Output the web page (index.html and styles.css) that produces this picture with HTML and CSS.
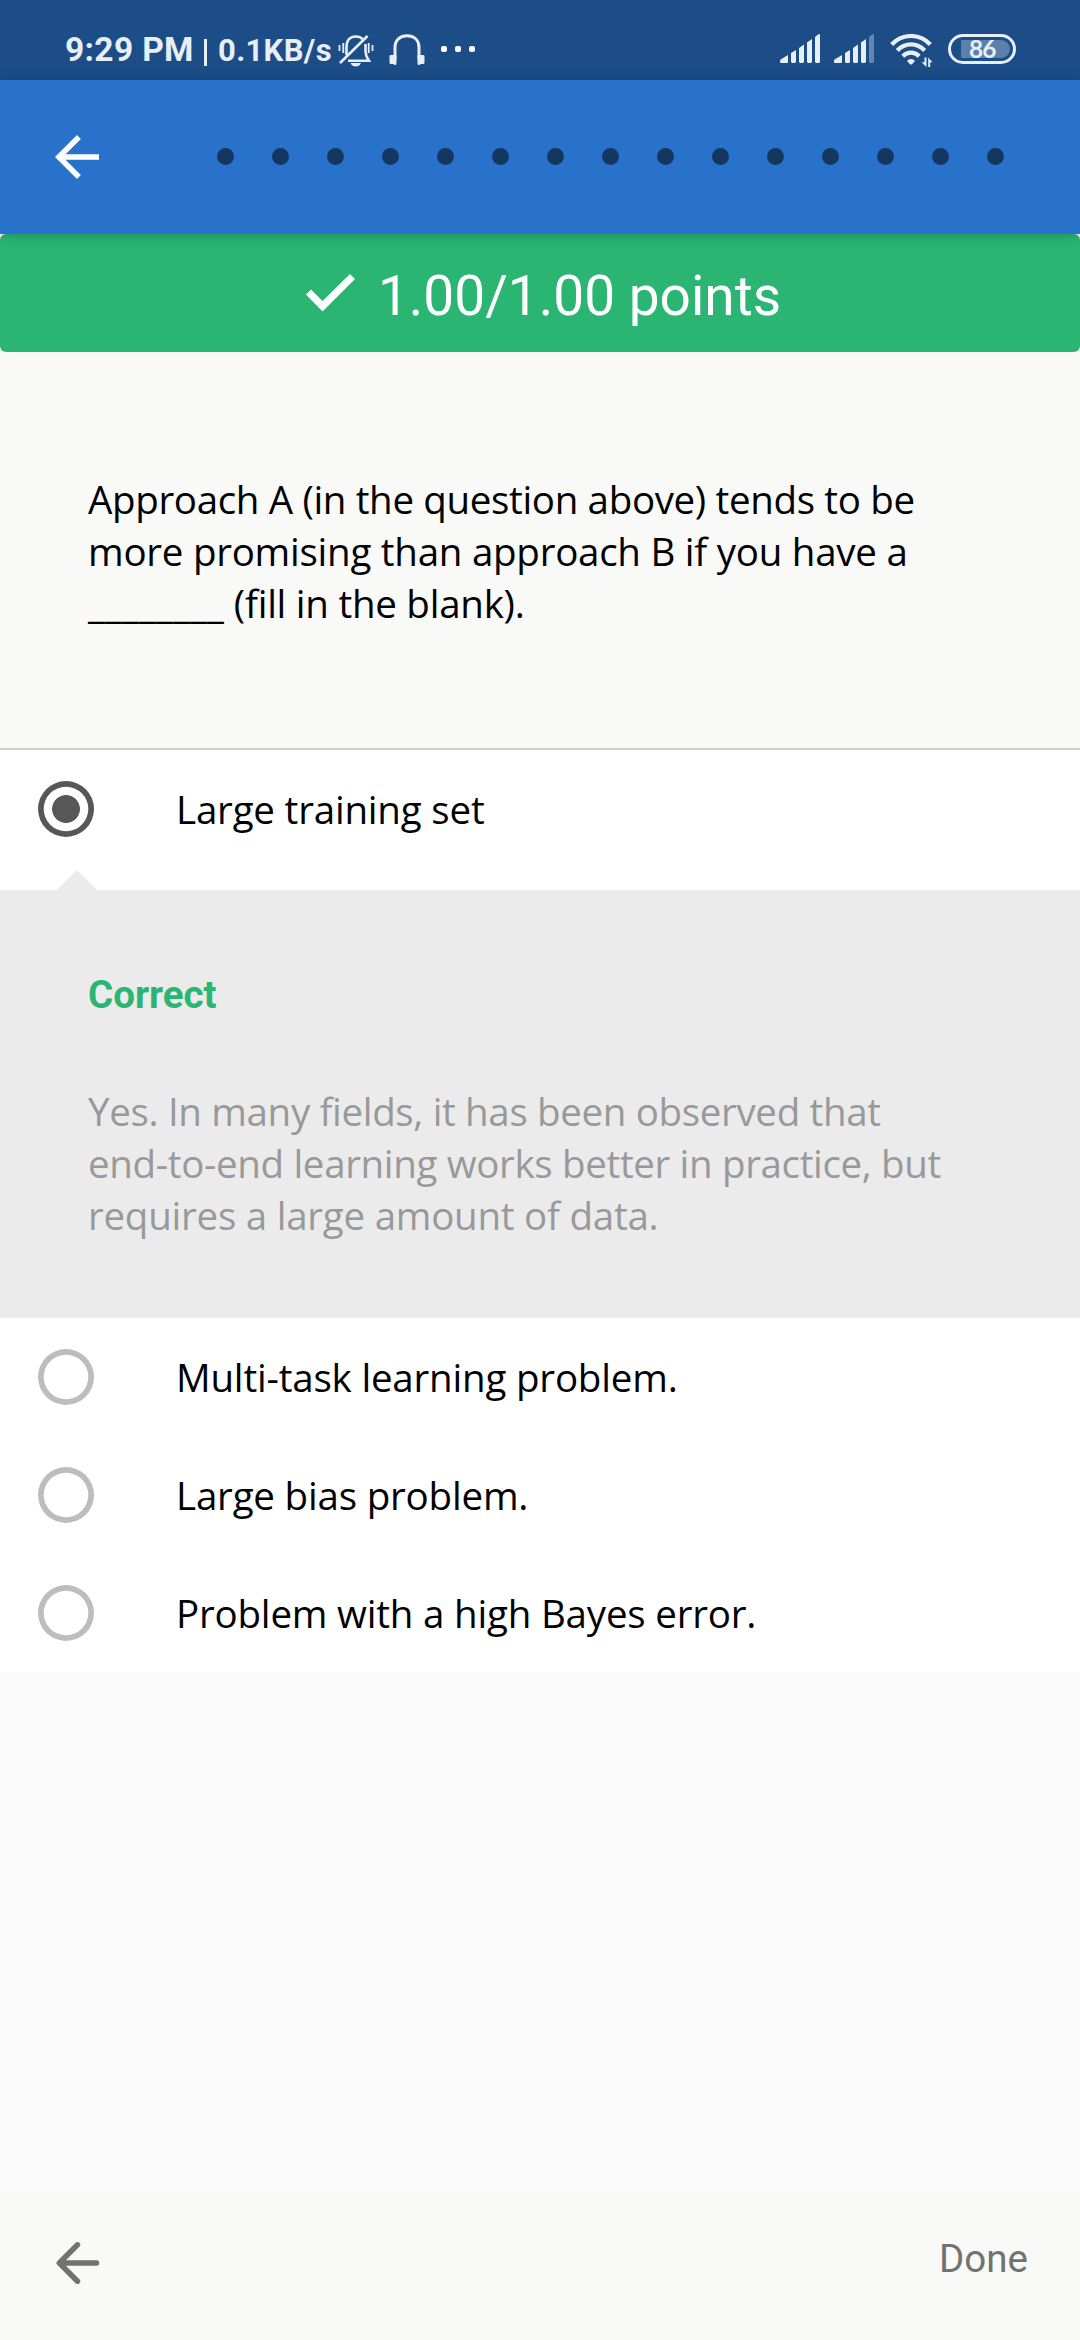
FILE: index.html
```html
<!DOCTYPE html>
<html lang="en">
<head>
<meta charset="utf-8">
<title>Quiz</title>
<link rel="stylesheet" href="styles.css">
</head>
<body>
<div class="screen">
  <div class="status-bar">
    <div class="status-left">
      <span class="clock">9:29 PM</span>
      <span class="divider"></span>
      <span class="speed">0.1KB/s</span>
      <svg class="bell" width="36" height="34" viewBox="0 0 36 34" fill="none" stroke="#e8eef6" stroke-width="2.6">
        <path d="M8.5 21V13C8.5 6 12 2.500 18 2.500C21 2.500 23 3.400 24.500 5M27.500 10V17C27.500 22 29 23.500 31 26.700H10"/>
        <path d="M2 29L29.500 2"/>
        <path d="M5.300 9V19M1.500 11V17M30.700 9V19M34.500 11V17" stroke-width="1.800"/>
        <path d="M12.500 29H23Q21.500 32.500 17.700 32.500Q14 32.500 12.500 29Z" fill="#e8eef6" stroke="none"/>
      </svg>
      <svg class="headphones" width="36" height="32" viewBox="0 0 36 32">
        <path d="M6 25V13.500C6 6 11 1.800 17.900 1.800C25 1.800 30 6 30 13.500V25" fill="none" stroke="#e8eef6" stroke-width="3"/>
        <path d="M.5 22Q.5 21 2 21H6.500Q7.500 21 7.500 22V29.500Q7.500 31 6 31Q4.500 31 4.500 30H2Q.5 30 .5 28.500ZM35.500 22Q35.500 21 34 21H29.500Q28.500 21 28.500 22V29.500Q28.500 31 30 31Q31.500 31 31.500 30H34Q35.500 30 35.500 28.500Z" fill="#e8eef6"/>
      </svg>
      <span class="more"><i></i><i></i><i></i></span>
    </div>
    <div class="status-right">
      <svg width="40" height="29" viewBox="0 0 40 29" fill="#e8eef6">
        <path d="M0 27Q0 26 1 25.300L8 21V28Q8 29 7 29H1Q0 29 0 28ZM11 19L16 16V28L15 29H12L11 28ZM19 14L24 10.500V28L23 29H20L19 28ZM27 8.500L32 5V28L31 29H28L27 28ZM35 3L38 .5Q40-.5 40 1V28L39 29H36L35 28Z"/>
      </svg>
      <svg class="signal-two" width="40" height="29" viewBox="0 0 40 29" fill="#e8eef6">
        <path d="M0 27Q0 26 1 25.300L8 21V28Q8 29 7 29H1Q0 29 0 28ZM11 19L16 16V28L15 29H12L11 28ZM19 14L24 10.500V28L23 29H20L19 28ZM27 8.500L32 5V28L31 29H28L27 28Z"/>
        <path d="M35 3L38 .5Q40-.5 40 1V28L39 29H36L35 28Z" opacity=".35"/>
      </svg>
      <svg class="wifi" width="44" height="34" viewBox="0 0 44 34" fill="none" stroke="#e8eef6" stroke-width="4.200">
        <path d="M1.700 10.500Q9.500 2 21 2T40.300 10.500M7.300 16.500Q13 10.300 21 10.300T34.700 16.500M12.800 22.200Q16.500 18.600 21 18.600T29.200 22.200"/>
        <path d="M17 27Q18.500 25 21 25T25 27L22 30.200Q21 31 20 30.200Z" fill="#e8eef6" stroke="none"/>
        <path d="M36.500 23.500V33L31.500 28.300H34.500V23.500ZM38.200 33V23.500L42.500 28.300H40.200V33Z" fill="#e8eef6" stroke="none"/>
      </svg>
      <span class="battery"><span class="level">86</span></span>
    </div>
  </div>

  <header class="app-bar">
    <svg width="66" height="66" viewBox="0 0 24 24" fill="#fff"><path d="M20 11H7.830l5.590-5.590L12 4l-8 8 8 8 1.410-1.410L7.830 13H20v-2z"/></svg>
    <div class="steps"><i></i><i></i><i></i><i></i><i></i><i></i><i></i><i></i><i></i><i></i><i></i><i></i><i></i><i></i><i></i></div>
  </header>

  <main>
    <div class="score-wrap">
      <div class="score">
        <svg width="49" height="38" viewBox="0 0 49 38" fill="#fff"><path d="M0 20.500L5 15.500L16.500 27L44 0L49 5L16.500 37.500Z"/></svg>
        <span class="points">1.00/1.00 points</span>
      </div>
    </div>
    <p class="question"><span class="tight">Approach A (in the question above) tends to be</span><br>more promising than approach B if you have a<br><span class="blank">________</span> (fill in the blank).</p>
    <div class="option first"><span class="radio checked"></span><span>Large training set</span></div>
    <section class="feedback">
      <h2>Correct</h2>
      <p><span class="tight">Yes. In many fields, it has been observed that</span><br><span class="tight">end-to-end learning works better in practice, but</span><br>requires a large amount of data.</p>
    </section>
    <div class="option"><span class="radio"></span><span>Multi-task learning problem.</span></div>
    <div class="option"><span class="radio"></span><span>Large bias problem.</span></div>
    <div class="option"><span class="radio"></span><span>Problem with a high Bayes error.</span></div>
  </main>

  <footer class="footer">
    <svg width="44" height="44" viewBox="0 0 44 44" fill="none" stroke="#727270" stroke-width="5.500" stroke-linecap="round" stroke-linejoin="round"><path d="M40.500 22H4M21.500 3.800L3.300 22L21.500 40.200"/></svg>
    <span class="done">Done</span>
  </footer>
</div>
</body>
</html>
```
FILE: styles.css
```css
* { box-sizing: border-box; }
body { margin: 0; }
p, h2 { margin: 0; }
svg { display: block; flex: none; }

.screen {
  width: 1080px;
  height: 2340px;
  display: flex;
  flex-direction: column;
  background: #fafafa;
  font-family: "Open Sans", sans-serif;
  font-size: 38.5px;
  line-height: 52px;
  color: #000;
  white-space: nowrap;
  overflow: hidden;
}

.status-bar {
  height: 80px;
  flex: none;
  display: flex;
  justify-content: space-between;
  padding: 34px 64px 0 65px;
  background: #1c4d87;
  color: #e8eef6;
  font-family: Roboto, sans-serif;
  font-weight: 700;
}
.status-left, .status-right { display: flex; align-items: flex-start; height: 34px; }
.clock { width: 139px; font-size: 33.5px; line-height: 32px; letter-spacing: .35px; }
.divider { width: 3px; height: 27px; margin-top: 5px; background: #e8eef6; }
.speed { width: 119px; margin-left: 11px; font-size: 31px; line-height: 34px; letter-spacing: .35px; }
.bell { margin-left: 1px; }
.headphones { margin-left: 15px; }
.more { display: flex; gap: 8px; margin: 12px 0 0 16px; }
.more i { width: 6px; height: 6px; border-radius: 2px; background: #fff; }
.signal-two { margin-left: 14px; }
.wifi { margin-left: 16px; }
.battery {
  width: 68px;
  height: 30px;
  margin-left: 14px;
  padding: 3px 3px 3px 10px;
  border: 3px solid #e8eef6;
  border-radius: 15px;
}
.level {
  display: block;
  width: 49px;
  height: 18px;
  padding-left: 8px;
  border-radius: 1px 9px 9px 1px;
  background: #5c80ab;
  font: 700 24.500px/18px Lato, sans-serif;
  letter-spacing: -1px;
}

.app-bar {
  height: 154px;
  flex: none;
  display: flex;
  align-items: center;
  padding: 0 76px 0 44px;
  background: #2972cc;
  position: relative;
  box-shadow: 0 2px 12px rgba(0, 0, 0, .22);
}
.steps { display: flex; gap: 38px; margin: 0 0 1px 107px; }
.steps i { width: 17px; height: 17px; border-radius: 50%; background: #14375f; }

.score-wrap { background: #fafafa; }
.score {
  height: 118px;
  display: flex;
  align-items: center;
  justify-content: center;
  gap: 23px;
  padding-left: 7px;
  border-radius: 6px;
  background: #2bb573;
  color: #fff;
  font: 400 55px/64px Roboto, sans-serif;
}
.points { padding-top: 6px; }

.question {
  height: 398px;
  padding: 121px 88px 0;
  border-bottom: 2px solid #cfcfcf;
  background: #f9f9f7;
  letter-spacing: -.25px;
}
.tight { letter-spacing: -.34px; }
.blank { letter-spacing: .15px; }

.option {
  height: 118px;
  display: flex;
  align-items: center;
  gap: 82px;
  padding-left: 38px;
  background: #fff;
  letter-spacing: -.19px;
}
.option.first { height: 140px; padding-bottom: 22px; }
.radio {
  width: 56px;
  height: 56px;
  border-radius: 50%;
  box-shadow: inset 0 0 0 5.700px #bdbdbd;
}
.radio.checked {
  box-shadow: inset 0 0 0 5.700px #575757;
  background: radial-gradient(circle, #575757 13.500px, transparent 14.300px);
}

.feedback {
  height: 428px;
  position: relative;
  padding: 79px 88px 0;
  background: #ebebeb;
  color: #999;
  letter-spacing: -.24px;
}
/* pointer toward the selected option */
.feedback::before {
  content: "";
  position: absolute;
  left: 57px;
  top: -20px;
  width: 40px;
  height: 20px;
  background: #ebebeb;
  clip-path: polygon(50% 0, 100% 100%, 0 100%);
}
.feedback h2 {
  margin-bottom: 64px;
  font: 700 38.500px/52px Roboto, sans-serif;
  letter-spacing: 0;
  color: #2bb573;
}

.footer {
  height: 154px;
  flex: none;
  margin-top: auto;
  display: flex;
  align-items: center;
  justify-content: space-between;
  padding: 0 52px 0 56px;
  background: #f9f9f7;
  color: #727270;
  font-family: Roboto, sans-serif;
}
.done { padding-bottom: 8px; }
```
